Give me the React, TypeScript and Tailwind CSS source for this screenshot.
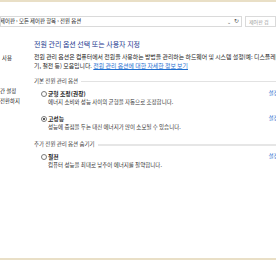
import React from 'react';

const font = { fontFamily: '"Noto Sans CJK KR", "Noto Sans", sans-serif' };

function Radio({ checked }: { checked?: boolean }) {
	return (
		<span className="mr-[1px] inline-flex h-[6px] w-[6px] items-center justify-center rounded-full border border-[#7a7a7a] bg-white">
			{checked && <span className="h-[2px] w-[2px] rounded-full bg-[#222]" />}
		</span>
	);
}

type Plan = { name: string; desc: string; checked?: boolean };

function PlanRow({ plan }: { plan: Plan }) {
	return (
		<div className="flex items-start">
			<div className="ml-[7px] flex-1">
				<div className="flex items-center text-[5.8px] font-bold leading-[9px] text-[#1a1a1a]">
					<Radio checked={plan.checked} />
					{plan.name}
				</div>
				<div className="pl-[7px] text-[5.5px] leading-[9px] text-[#333]">{plan.desc}</div>
			</div>
			<a className="-mr-[14px] text-[5.5px] leading-[9px] text-[#1f6fd0]">설정 변경</a>
		</div>
	);
}

export default function App() {
	return (
		<div className="flex h-[260px] w-[276px] flex-col overflow-hidden bg-white" style={font}>
			<div className="h-[2px] bg-[#e9dfc6]" />
			<div className="mt-[14px] flex h-[11px] items-center gap-[3px]">
				<div className="flex h-full flex-1 items-center overflow-hidden whitespace-nowrap border border-[#dadada] text-[5.4px] text-[#222]">
					<span className="-ml-[1px]">제어판 › 모든 제어판 항목 › 전원 옵션</span>
					<span className="ml-auto mr-[3px] text-[5px] text-[#555]">⌄</span>
					<span className="mr-[2px] text-[5.5px] text-[#555]">↻</span>
				</div>
				<div className="flex h-full w-[31px] items-center overflow-hidden whitespace-nowrap border border-[#dadada] pl-[3px] text-[5px] text-[#999]">
					제어판 검
				</div>
			</div>
			<div className="flex flex-1">
				<div className="w-[34px] shrink-0 overflow-hidden whitespace-nowrap text-[5.4px] text-[#222]">
					<div className="mt-[27px] ml-[2px]">사용</div>
					<div className="mt-[24px] leading-[10px]">간 설정</div>
					<div className="leading-[10px]">전환하지</div>
				</div>
				<div className="flex-1 overflow-hidden whitespace-nowrap">
					<div className="mt-[12px] text-[7px] leading-[10px] text-[#1e3a8f]">
						전원 관리 옵션 선택 또는 사용자 지정
					</div>
					<div className="mt-[3px] text-[5.9px] leading-[9px] text-[#222]">
						<div>전원 관리 옵션은 컴퓨터에서 전원을 사용하는 방법을 관리하는 하드웨어 및 시스템 설정(예: 디스플레이 끄</div>
						<div>
							기, 절전 등) 모음입니다.{' '}
							<a className="text-[#1f6fd0] underline">전원 관리 옵션에 대한 자세한 정보 보기</a>
						</div>
					</div>
					<div className="mt-[7px] flex items-center gap-[3px] text-[5.5px] leading-[9px] text-[#444]">
						기본 전원 관리 옵션
						<div className="h-px flex-1 bg-[#e2e2e2]" />
					</div>
					<div className="mt-[3px] flex flex-col gap-[7px]">
						<PlanRow plan={{ name: '균형 조정(권장)', desc: '에너지 소비와 성능 사이의 균형을 자동으로 조정합니다.' }} />
						<PlanRow plan={{ name: '고성능', desc: '성능에 중점을 두는 대신 에너지가 많이 소모될 수 있습니다.', checked: true }} />
					</div>
					<div className="mt-[8px] flex items-center gap-[3px] text-[5.5px] leading-[9px] text-[#444]">
						추가 전원 관리 옵션 숨기기
						<div className="h-[2px] flex-1 bg-[#e6e6e6]" />
					</div>
					<div className="mt-[3px]">
						<PlanRow plan={{ name: '절전', desc: '컴퓨터 성능을 최대로 낮추어 에너지를 절약합니다.' }} />
					</div>
				</div>
			</div>
			<div className="h-[2px] bg-[#e9dfc6]" />
		</div>
	);
}
